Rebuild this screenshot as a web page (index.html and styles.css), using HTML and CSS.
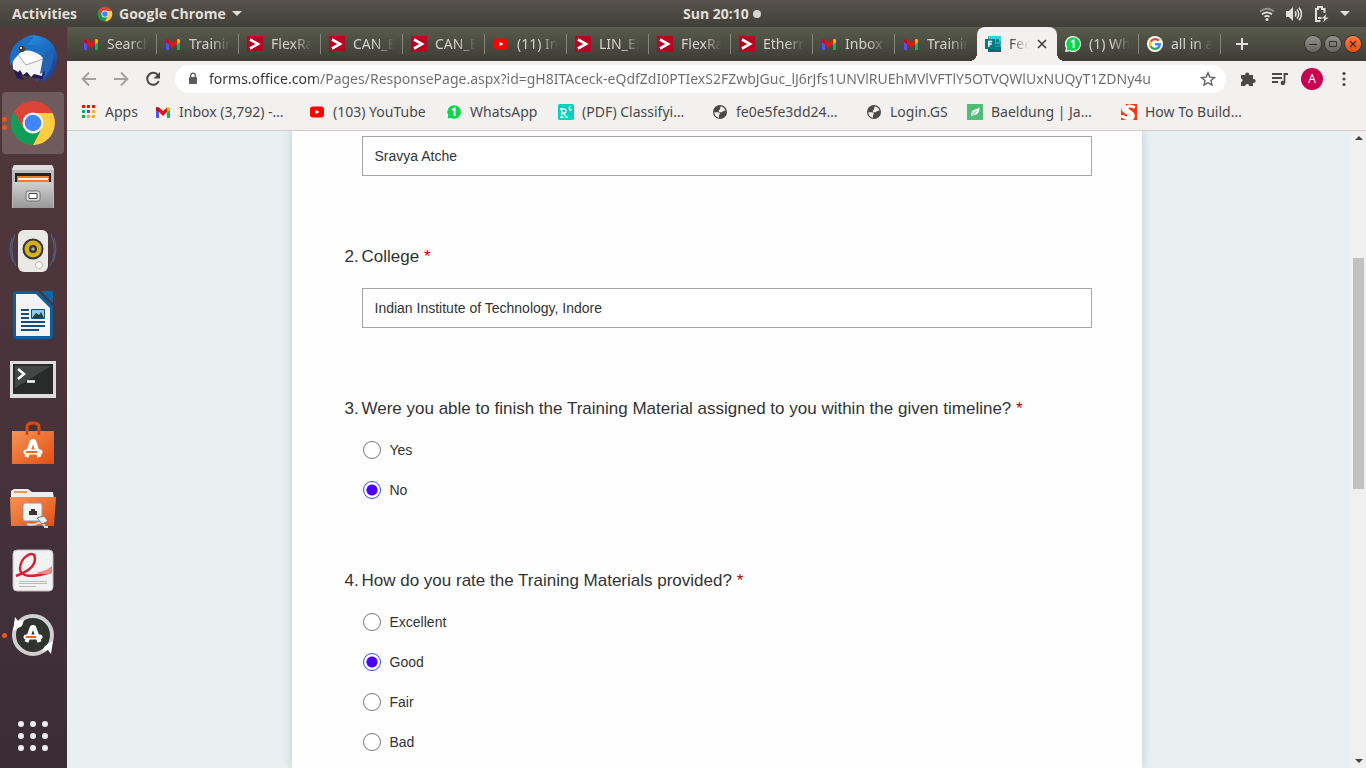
FILE: index.html
```html
<!DOCTYPE html>
<html lang="en">
<head>
<meta charset="utf-8">
<title>Feedback form</title>
<link rel="stylesheet" href="styles.css">
</head>
<body>
<svg class="sprite" aria-hidden="true">
  <defs>
    <linearGradient id="silver" x1="0" y1="0" x2="0" y2="1"><stop offset="0" stop-color="#d0d0d0"/><stop offset="1" stop-color="#999"/></linearGradient>
    <linearGradient id="orange" x1="0" y1="0" x2="1" y2="1"><stop offset="0" stop-color="#f59355"/><stop offset="1" stop-color="#e44f14"/></linearGradient>
    <linearGradient id="bird" x1="0" y1="0" x2="1" y2="1"><stop offset="0" stop-color="#2b9be0"/><stop offset=".6" stop-color="#1a62bd"/><stop offset="1" stop-color="#24277b"/></linearGradient>
  </defs>
  <symbol id="gmail" viewBox="0 0 16 16"><path fill="#5552ee" d="M1 4h3v10H2q-1 0-1-1z"/><path fill="#11b45a" d="M12 6l3-2v9q0 1-1 1h-2z"/><path fill="#e8140c" d="M1 5Q1 2 4 3.600l4 3.400 4-3.400V8l-4 4-4-4-3-2z"/><path fill="#ffc400" d="M12 3.600Q15 2 15 5v1l-3 2.500z"/><path fill="#b50d24" d="M1 5q0-1.500 1-2l2 1.500V8L1 6z"/></symbol>
  <symbol id="vector" viewBox="0 0 16 16"><path fill="#b70623" d="M0 0h16v16H0z"/><path fill="none" stroke="#fff" stroke-width="2.600" d="M3 3.500l8 4.500-8 4.500"/></symbol>
  <symbol id="youtube" viewBox="0 0 16 16"><rect x="1" y="2.500" width="14" height="11" rx="3" fill="#f00"/><path fill="#fff" d="M6.500 5.700v4.600L10.500 8z"/></symbol>
  <symbol id="whatsapp" viewBox="0 0 16 16"><path fill="#fff" d="M8 0a8 8 0 1 1-3.400 15.200L0 16l1-4A8 8 0 0 1 8 0z"/><path fill="#0bd54b" d="M8 1.200a6.800 6.800 0 1 1-3.200 12.700L1.500 14.600l.8-3A6.800 6.800 0 0 1 8 1.200z"/><path fill="none" stroke="#fff" stroke-width="1.800" d="M6 6l2.600-1.500V12"/></symbol>
  <symbol id="forms" viewBox="0 0 16 16"><path fill="#26a9b5" d="M3 0h13v16H3z"/><path fill="#37d0d8" d="M4 0h12v5H4z"/><path fill="#0b6773" d="M3 11h13v5H3z"/><circle cx="12.500" cy="4.500" r="1.700" fill="#0b7f8b"/><path fill="#0b7f8b" d="M10 8h5v2h-5zM10 12h5v2h-5z"/><rect y="3" width="10" height="10" fill="#037b83"/><path fill="none" stroke="#fff" stroke-width="1.500" d="M3.800 11V5.500H7.200M4 8h2.800"/></symbol>
  <symbol id="google" viewBox="0 0 16 16"><circle cx="8" cy="8" r="8" fill="#fff"/><g fill="none" stroke-width="2.400"><path stroke="#ea4335" d="M3.800 5.600A4.900 4.900 0 0 1 11.800 4.800"/><path stroke="#fbbc05" d="M3.800 5.400a5 5 0 0 0 0 5.200"/><path stroke="#34a853" d="M3.600 10.200a4.900 4.900 0 0 0 7.900 1.200"/><path stroke="#4285f4" d="M8 8.200h4.800a5 5 0 0 1-1.600 3.600"/></g></symbol>
  <symbol id="chrome" viewBox="0 0 48 48"><circle cx="24" cy="24" r="22" fill="#db4437"/><path fill="#0f9d58" d="M5 13A22 22 0 0 0 24 46l9-17-9 5-10-6z"/><path fill="#ffcd40" d="M24 46A22 22 0 0 0 43.500 14H24l9 15z"/><path fill="#db4437" d="M5 13A22 22 0 0 1 43.500 14H24l-10 14z"/><circle cx="24" cy="24" r="10.500" fill="#f5f5f5"/><circle cx="24" cy="24" r="8.300" fill="#4285f4"/></symbol>
  <symbol id="apps" viewBox="0 0 16 16"><path fill="#e8140c" d="M1 1h3v3H1zM6 1h3v3H6zM11 1h3v3h-3z"/><path fill="#0fa958" d="M1 6h3v3H1zM1 11h3v3H1z"/><path fill="#5552ee" d="M6 6h3v3H6z"/><path fill="#ffb400" d="M11 6h3v3h-3zM6 11h3v3H6zM11 11h3v3h-3z"/></symbol>
  <symbol id="gate" viewBox="0 0 16 16"><rect width="16" height="16" rx="1.500" fill="#0ccfbf"/><path fill="none" stroke="#fff" stroke-width="1.300" d="M2 13.300h3.500M3.700 13V5M2 5h3.500q2.500 0 2.500 2T5.500 9.200H4M6 9.200l2 4h2"/><path fill="none" stroke="#fff" d="M13 2.500h-1q-1 0-1 2t1 2h1v-2"/></symbol>
  <symbol id="globe" viewBox="0 0 16 16"><circle cx="8" cy="8" r="7" fill="#4a4a4a"/><path fill="#f2f1f0" d="M2.300 8.300H6q2 0 2 1.700l-1 .8v3Q2.500 13 2.300 8.300zM8.500 2.400q4 .2 5 4.100l-2.500.7-1.500 1H7.300L6.500 6.500l1.500-1z"/></symbol>
  <symbol id="leaf" viewBox="0 0 16 16"><path fill="#52bd78" d="M0 0h16v16H0z"/><path fill="#fff" d="M12.500 3.500q0 7-5 7.500-2.500.5-3.500 1.500 0-6 4-7 3-.5 4.500-2z"/><path stroke="#52bd78" d="M5 11.500l5-5"/></symbol>
  <symbol id="snake" viewBox="0 0 16 16"><path fill="#f5380d" d="M5 0h11v16h-4q4-5-1-8Q4 6 5 0zM0 3q0 5 5 7 3 2 0 3.500L0 11zM0 13q2 2 5 3H0z"/><path fill="#f5380d" d="M8 3q3-2 7 0v2Q8 3 8 3z"/><path fill="none" stroke="#fff" stroke-width="3" d="M14 3.500Q6 0 6 4.500C6 8 12.500 7.500 12 11.500 11 15.500 5 14.500 1 12"/></symbol>
</svg>

<header class="topbar">
  <div class="top-left">
    <button type="button">Activities</button>
    <button class="app-menu" type="button"><svg class="i16"><use href="#chrome"/></svg>Google Chrome<span class="caret"></span></button>
  </div>
  <time class="clock">Sun 20:10<span class="notice"></span></time>
  <button class="status" type="button" aria-label="System menu">
    <svg class="i16" viewBox="0 0 16 16" fill="none" stroke="#e2dfda" stroke-width="1.800"><path opacity=".45" d="M1 5.500q7-5.500 14 0"/><path d="M3 8.200q5-3.800 10 0M5.500 10.700q2.500-1.700 5 0"/><circle cx="8" cy="13.500" r="1.500" fill="#e2dfda" stroke="none"/></svg>
    <svg class="i16" viewBox="0 0 16 16" fill="none" stroke="#e2dfda" stroke-width="1.500"><path fill="#e2dfda" stroke="none" d="M0 5h3l4-4v14l-4-4H0z"/><path d="M9 5.500q2 2.500 0 5M11 3.500q3.500 4.500 0 9M13 1.800q5 6.200 0 12.400"/></svg>
    <svg class="i16" viewBox="0 0 16 16" fill="none" stroke="#e2dfda" stroke-width="2"><path d="M7.500 15H3V3h2V1h4v2h2.500v4M5 12h3.500"/><path fill="#e2dfda" stroke="none" d="M13.500 8L8.500 12.500h3L10 16.500l5.500-5h-3z"/></svg>
    <span class="caret"></span>
  </button>
</header>

<div class="desktop">
  <nav class="dock" aria-label="Dock">
    <button class="dock-item" type="button" aria-label="Thunderbird"><svg viewBox="0 0 48 48"><path fill="url(#bird)" d="M12 6Q20-2 30 1q17 4 18 22 0 14-11 22l-4 3 1-5-8 4 4-6z"/><path fill="#241a58" d="M3 31l5 12 7 2-3-5 9 2 12 2 4-8z"/><path fill="#f5f5f5" d="M8 13l-5 7 1 14 5 3 2-2 3 5 4-3 4 5 3-3 8 2 3-24q-12-8-28-5z"/><path fill="#fff" stroke="#aaa" d="M7 17l10 13 17-6"/><path fill="#1d6fc5" d="M1 31Q-1 12 12 5 17 0 25 2l-7 8q12-2 18 7v8l-5-5Q17 11 9 20q-5 5-8 11z"/><circle cx="13" cy="14" r="3" fill="#503b24"/><circle cx="12" cy="13" r="1" fill="#fff"/><path fill="#2563b3" d="M35 17l10 1-3 15-8 12 2-9-5 3z"/></svg></button>
    <button class="dock-item current" type="button" aria-label="Chrome"><span class="pips"><i></i><i></i></span><svg><use href="#chrome"/></svg></button>
    <button class="dock-item" type="button" aria-label="Files"><svg viewBox="0 0 48 48"><path fill="#bcbcbc" d="M5 2h38l2 4v39H3V6z"/><path fill="#ddd" d="M5 2h38l2 5H3z"/><path fill="#252525" d="M6 10h36v10H6z"/><path fill="#ef7b2b" d="M8 13h32v7H8z"/><path fill="#fff1d8" d="M9 15h30v2H9z"/><path fill="url(#silver)" d="M4 19h40v26H4z"/><rect x="17" y="28" width="14" height="10" rx="2" fill="#ddd" stroke="#777"/><path fill="#fff" stroke="#444" d="M20 30.500h8v5h-8z"/></svg></button>
    <button class="dock-item" type="button" aria-label="Rhythmbox"><svg viewBox="0 0 48 48"><g fill="none" stroke="#566a98" stroke-width="1.200" opacity=".7"><path d="M6 7q-7 17 1 32M3 11q-4 13 1 24M42 7q7 17-1 32M45 11q4 13-1 24"/></g><rect x="9" y="3" width="30" height="42" rx="6" fill="#e9e9e7"/><circle cx="24" cy="22" r="10.500" fill="#343434"/><circle cx="24" cy="22" r="8.500" fill="#d4b01f"/><circle cx="24" cy="22" r="4" fill="#333"/><circle cx="24" cy="22" r="1.800" fill="#aaa"/><circle cx="30" cy="38" r="3.500" fill="#f8f8f8" stroke="#bbb"/></svg></button>
    <button class="dock-item" type="button" aria-label="LibreOffice Writer"><svg viewBox="0 0 48 48"><rect x="4" y="0" width="40" height="48" rx="3" fill="#0d5d97"/><path fill="#4c3338" d="M29 0l3 0 12 12v3z"/><path fill="#0868a8" d="M32 0h11q1 0 1 2v10z"/><path fill="#f3f3f3" d="M7 3h20l14 14v28H7z"/><path fill="none" stroke="#124f7c" stroke-width="2" d="M12 19h8M12 23h8M12 27h8M12 31h24M12 35h24M12 39h18"/><path fill="#91c9ea" stroke="#124f7c" d="M22.500 18.500h13v9h-13z"/><path fill="#303c45" d="M23 27l4-5 3 2 2-3 3 6z"/></svg></button>
    <button class="dock-item" type="button" aria-label="Terminal"><svg viewBox="0 0 48 48"><path fill="#ddd" d="M1 6h46v37H1z"/><path fill="#292b2b" d="M4 9h40v30H4z"/><path fill="#454747" d="M6 11h36L6 33z"/><path fill="none" stroke="#fff" stroke-width="2.500" d="M9 14l6 5-6 5M18 26.500h8"/></svg></button>
    <button class="dock-item" type="button" aria-label="Software"><svg viewBox="0 0 48 48"><path fill="none" stroke="#d84a15" stroke-width="3" d="M18 18V8q0-4 6-4t6 4v10"/><path fill="url(#orange)" d="M3 12h42v33H3z"/><path fill="none" stroke="#c94414" stroke-width="2.500" d="M18 16v-5M30 16v-5"/><path fill="none" stroke="#fff" stroke-width="4" stroke-linejoin="bevel" d="M17.500 38l5.500-16h2l5.500 16"/><path stroke="#fff" stroke-width="5" stroke-linecap="round" d="M17 33h14"/><path stroke="#eb652c" stroke-width="2" d="M17 33h11"/></svg></button>
    <button class="dock-item" type="button" aria-label="Network folder"><svg viewBox="0 0 48 48"><path fill="#eee" d="M2 14V8l3-2h14l4 3h21l1 7z"/><path fill="#f69453" d="M5 8h13v2H5z"/><path fill="url(#orange)" d="M1 14h46l-2 29H2z"/><rect x="14" y="20" width="19" height="18" rx="2" fill="#f3f3f3" stroke="#999"/><path fill="#353832" d="M20 32v-4h2v-2h4v2h2v4z"/><path fill="none" stroke="#ddd" stroke-width="2" d="M18 41q6 2 11-1 5-1 7 4l3 0"/><path fill="#eee" stroke="#777" d="M28 35l7-2 4 5-6 3z"/></svg></button>
    <button class="dock-item" type="button" aria-label="Document viewer"><svg viewBox="0 0 48 48"><rect x="4" y="3" width="40" height="41" rx="4" fill="#f2f2f2" stroke="#bbb"/><path fill="none" stroke="#d32331" stroke-width="2.500" d="M7 29q19-7 19-17 0-7-7-4-8 5-8 14 1 12 31 3"/><path fill="#e88b8e" d="M27 25q9 0 16-6v7q-7 3-16-1z"/><path stroke="#bbb" d="M10 34.500h28M10 36.500h28M10 39.500h17"/></svg></button>
    <button class="dock-item" type="button" aria-label="Software updater"><span class="pips"><i></i></span><svg viewBox="0 0 48 48"><circle cx="24" cy="24" r="19" fill="#30332f" stroke="#cfcfcf" stroke-width="4"/><path fill="#fff" d="M6 6l3 4 6-1-2 6-9 5zM42 43l-3-4-6 1 3-5 8-5z"/><path fill="none" stroke="#fff" stroke-width="4" stroke-linejoin="bevel" d="M17.500 31L23 16h2l5.500 15"/><path stroke="#fff" stroke-width="5" stroke-linecap="round" d="M17 26h14"/><path stroke="#ec6424" stroke-width="2" d="M17 26h10"/></svg></button>
    <button class="dock-item launcher" type="button" aria-label="Show applications"><svg viewBox="0 0 48 48" fill="#eee"><circle cx="12" cy="12" r="3"/><circle cx="24" cy="12" r="3"/><circle cx="36" cy="12" r="3"/><circle cx="12" cy="24" r="3"/><circle cx="24" cy="24" r="3"/><circle cx="36" cy="24" r="3"/><circle cx="12" cy="36" r="3"/><circle cx="24" cy="36" r="3"/><circle cx="36" cy="36" r="3"/></svg></button>
  </nav>

  <div class="window">
    <div class="tabstrip">
      <button class="tab" type="button"><svg class="i16"><use href="#gmail"/></svg><span>Search</span></button>
      <button class="tab" type="button"><svg class="i16"><use href="#gmail"/></svg><span>Trainin</span></button>
      <button class="tab" type="button"><svg class="i16"><use href="#vector"/></svg><span>FlexRa</span></button>
      <button class="tab" type="button"><svg class="i16"><use href="#vector"/></svg><span>CAN_E</span></button>
      <button class="tab" type="button"><svg class="i16"><use href="#vector"/></svg><span>CAN_E</span></button>
      <button class="tab" type="button"><svg class="i16"><use href="#youtube"/></svg><span>(11) In</span></button>
      <button class="tab" type="button"><svg class="i16"><use href="#vector"/></svg><span>LIN_E:</span></button>
      <button class="tab" type="button"><svg class="i16"><use href="#vector"/></svg><span>FlexRa</span></button>
      <button class="tab" type="button"><svg class="i16"><use href="#vector"/></svg><span>Ethern</span></button>
      <button class="tab" type="button"><svg class="i16"><use href="#gmail"/></svg><span>Inbox</span></button>
      <button class="tab" type="button"><svg class="i16"><use href="#gmail"/></svg><span>Trainin</span></button>
      <div class="tab active"><svg class="i16"><use href="#forms"/></svg><span>Fee</span><button class="close" type="button" aria-label="Close tab"><svg viewBox="0 0 10 10" fill="none" stroke="#444" stroke-width="1.700"><path d="M1 1l8 8M9 1L1 9"/></svg></button></div>
      <button class="tab" type="button"><svg class="i16"><use href="#whatsapp"/></svg><span>(1) Wh</span></button>
      <button class="tab" type="button"><svg class="i16"><use href="#google"/></svg><span>all in a</span></button>
      <button class="new-tab" type="button" aria-label="New tab"><svg viewBox="0 0 12 12" stroke="#e2dfda" stroke-width="2"><path d="M6 0v12M0 6h12"/></svg></button>
      <div class="controls">
        <button type="button" aria-label="Minimize"><svg viewBox="0 0 16 16" stroke="#33322e"><path d="M4 8.500h8"/></svg></button>
        <button type="button" aria-label="Maximize"><svg viewBox="0 0 16 16" fill="none" stroke="#33322e"><path d="M4.500 5.500h7v5h-7z"/></svg></button>
        <button class="quit" type="button" aria-label="Close"><svg viewBox="0 0 16 16" stroke="#4b1f08" stroke-width="1.300"><path d="M5 5l6 6M11 5l-6 6"/></svg></button>
      </div>
    </div>

    <div class="toolbar">
      <button class="tool" type="button" aria-label="Back"><svg class="i16" viewBox="0 0 16 16" fill="none" stroke="#a3a2a1" stroke-width="2"><path d="M15 8H2M8 1.500L1.700 8 8 14.500"/></svg></button>
      <button class="tool" type="button" aria-label="Forward"><svg class="i16" viewBox="0 0 16 16" fill="none" stroke="#a3a2a1" stroke-width="2"><path d="M1 8h13M8 1.500L14.300 8 8 14.500"/></svg></button>
      <button class="tool" type="button" aria-label="Reload"><svg class="i16" viewBox="0 0 16 16" fill="none" stroke="#494949" stroke-width="2"><path d="M13 4.200A6 6 0 1 0 13.800 10"/><path fill="#494949" stroke="none" d="M15 1v6.500H8.500z"/></svg></button>
      <div class="omnibox">
        <svg class="i16" viewBox="0 0 16 16"><rect x="4" y="6" width="8" height="7" rx="1" fill="#5c5c5c"/><path fill="none" stroke="#5c5c5c" stroke-width="1.300" d="M5.700 6V4.500a2.300 2.300 0 0 1 4.600 0V6"/></svg>
        <input type="text" aria-label="Address" value="forms.office.com/Pages/ResponsePage.aspx?id=gH8ITAceck-eQdfZdI0PTIexS2FZwbJGuc_lJ6rJfs1UNVlRUEhMVlVFTlY5OTVQWlUxNUQyT1ZDNy4u">
        <button class="tool" type="button" aria-label="Bookmark"><svg class="i16" viewBox="0 0 16 16" fill="none" stroke="#5f5f5f" stroke-width="1.400"><path d="M8 1.800l1.800 4.300 4.700.4-3.600 3 1.100 4.600-4-2.400-4 2.400 1.100-4.600-3.600-3 4.700-.4z"/></svg></button>
      </div>
      <button class="tool" type="button" aria-label="Extensions"><svg class="i16" viewBox="0 0 16 16"><path fill="#494949" d="M1 4h4.300a2 2 0 1 1 3.800 0H13v4a2 2 0 1 1 0 3.800V15H9.200a2 2 0 0 0-4 0H1v-3.800a2 2 0 0 0 0-3.900z"/></svg></button>
      <button class="tool" type="button" aria-label="Media"><svg class="i16" viewBox="0 0 16 16" fill="none" stroke="#494949" stroke-width="1.800"><path d="M0 3h10M0 7h10M0 11h6M12.500 12V3H16"/><circle cx="10.800" cy="12" r="2.200" fill="#494949" stroke="none"/></svg></button>
      <button class="tool" type="button" aria-label="Profile"><span class="avatar">A</span></button>
      <button class="tool" type="button" aria-label="Menu"><svg class="i16" viewBox="0 0 16 16" fill="#494949"><circle cx="8" cy="2.500" r="1.600"/><circle cx="8" cy="8" r="1.600"/><circle cx="8" cy="13.500" r="1.600"/></svg></button>
    </div>

    <nav class="bookmarks" aria-label="Bookmarks">
      <a href="#"><svg class="i16"><use href="#apps"/></svg>Apps</a>
      <a href="#"><svg class="i16"><use href="#gmail"/></svg>Inbox (3,792) -…</a>
      <a href="#"><svg class="i16"><use href="#youtube"/></svg>(103) YouTube</a>
      <a href="#"><svg class="i16"><use href="#whatsapp"/></svg>WhatsApp</a>
      <a href="#"><svg class="i16"><use href="#gate"/></svg>(PDF) Classifyi…</a>
      <a href="#"><svg class="i16"><use href="#globe"/></svg>fe0e5fe3dd24…</a>
      <a href="#"><svg class="i16"><use href="#globe"/></svg>Login.GS</a>
      <a href="#"><svg class="i16"><use href="#leaf"/></svg>Baeldung | Ja…</a>
      <a href="#"><svg class="i16"><use href="#snake"/></svg>How To Build…</a>
    </nav>

    <main class="page">
      <form class="form">
        <div class="question first"><div class="answer"><input type="text" aria-label="Name" value="Sravya Atche"></div></div>
        <div class="question">
          <label class="title" for="college"><span class="num">2.</span><span>College <b>*</b></span></label>
          <div class="answer"><input id="college" type="text" value="Indian Institute of Technology, Indore"></div>
        </div>
        <fieldset class="question">
          <legend class="title"><span class="num">3.</span><span>Were you able to finish the Training Material assigned to you within the given timeline? <b>*</b></span></legend>
          <div class="choices">
            <label><input type="radio" name="finish">Yes</label>
            <label><input type="radio" name="finish" checked>No</label>
          </div>
        </fieldset>
        <fieldset class="question">
          <legend class="title"><span class="num">4.</span><span>How do you rate the Training Materials provided? <b>*</b></span></legend>
          <div class="choices">
            <label><input type="radio" name="rate">Excellent</label>
            <label><input type="radio" name="rate" checked>Good</label>
            <label><input type="radio" name="rate">Fair</label>
            <label><input type="radio" name="rate">Bad</label>
          </div>
        </fieldset>
      </form>
      <div class="scrollbar" aria-hidden="true"><span class="up"></span><span class="thumb"></span><span class="down"></span></div>
    </main>
  </div>
</div>
</body>
</html>
```
FILE: styles.css
```css
* { box-sizing: border-box; }
body {
  margin: 0;
  height: 100vh;
  overflow: hidden;
  display: flex;
  flex-direction: column;
  font: 14px/20px "Noto Sans", "Open Sans", sans-serif;
  color: #4a4a4a;
}
button { border: 0; padding: 0; background: none; color: inherit; font: inherit; }
svg { display: block; }
.sprite { position: absolute; width: 0; height: 0; }
.i16 { width: 16px; height: 16px; flex: none; }

/* System bar */
.topbar {
  display: grid;
  grid-template-columns: 1fr auto 1fr;
  align-items: center;
  height: 27px;
  flex: none;
  padding: 0 16px 0 12px;
  background: linear-gradient(#58544c, #403f39);
  color: #e2dfda;
  font: 700 14px/20px "Open Sans", sans-serif;
}
.top-left { display: flex; align-items: center; gap: 20px; }
.app-menu { display: flex; align-items: center; gap: 6px; }
.caret { border: 5px solid transparent; border-top-color: #e2dfda; border-bottom: 0; }
.clock { display: flex; align-items: center; gap: 4px; padding-left: 82px; }
.notice { width: 8px; height: 8px; border-radius: 50%; background: #d7d4cf; }
.status { justify-self: end; display: flex; align-items: center; gap: 11px; }

.desktop { flex: 1; min-height: 0; display: flex; }

/* Dock */
.dock {
  width: 67px;
  flex: none;
  display: flex;
  flex-direction: column;
  gap: 2px;
  padding: 1px 3px 1px 2px;
  background: linear-gradient(#53383c, #46323a 60%, #3a2d34);
}
.dock-item {
  position: relative;
  flex: none;
  height: 62px;
  display: flex;
  align-items: center;
  justify-content: center;
  border-radius: 4px;
}
.dock-item svg { width: 48px; height: 48px; }
.current { background: #6f5a5d; }
.pips { position: absolute; left: 0; display: grid; gap: 3px; }
.pips i { width: 5px; height: 5px; border-radius: 50%; background: #f0541e; }
.launcher { margin-top: auto; }

/* Browser window */
.window { flex: 1; min-width: 0; display: flex; flex-direction: column; }
.tabstrip {
  height: 34px;
  flex: none;
  display: flex;
  align-items: center;
  padding: 0 5px 0 8px;
  background: linear-gradient(#585b4b, #3e3d38);
  color: #d4d3cb;
}
.tab {
  flex: 0 1 82px;
  min-width: 0;
  height: 20px;
  display: flex;
  align-items: center;
  gap: 8px;
  padding: 0 8px;
  border-right: 1px solid #85857a;
  text-align: left;
}
.tab span {
  flex: 1;
  overflow: hidden;
  white-space: nowrap;
  -webkit-mask-image: linear-gradient(to right, #000 calc(100% - 18px), transparent);
  mask-image: linear-gradient(to right, #000 calc(100% - 18px), transparent);
}
.tab:has(+ .active) { border-color: transparent; }
.active {
  position: relative;
  flex-basis: 80px;
  height: 34px;
  padding-right: 10px;
  border: 0;
  border-radius: 8px 8px 0 0;
  background: #f2f1f0;
  color: #4a4a4a;
}
.active::before, .active::after {
  content: "";
  position: absolute;
  bottom: 0;
  width: 8px;
  height: 8px;
}
.active::before { right: 100%; background: radial-gradient(circle at 0 0, transparent 8px, #f2f1f0 8px); }
.active::after { left: 100%; background: radial-gradient(circle at 100% 0, transparent 8px, #f2f1f0 8px); }
.close svg { width: 10px; height: 10px; }
.new-tab { padding: 0 15px; }
.new-tab svg { width: 12px; height: 12px; }
.controls { margin-left: auto; display: flex; gap: 4px; }
.controls button { width: 16px; height: 16px; border-radius: 50%; background: linear-gradient(#91918a, #66665f); box-shadow: 0 0 0 1px #33322e; }
.controls .quit { background: linear-gradient(#fa7c45, #e94f0c); }

.toolbar {
  height: 36px;
  flex: none;
  display: flex;
  align-items: center;
  gap: 4px;
  padding: 0 8px;
  background: #f2f1f0;
}
.tool { width: 28px; height: 28px; flex: none; display: grid; place-items: center; }
.omnibox {
  flex: 1;
  height: 28px;
  display: flex;
  align-items: center;
  gap: 8px;
  margin: 0 4px;
  padding: 0 4px 0 10px;
  border-radius: 14px;
  background: #fff;
}
.omnibox input {
  flex: 1;
  min-width: 0;
  border: 0;
  padding: 0;
  outline: 0;
  font: inherit;
  color: transparent;
  background: linear-gradient(to right, #333 106px, #6c6c6c 106px);
  -webkit-background-clip: text;
  background-clip: text;
}
.avatar { width: 22px; height: 22px; border-radius: 50%; background: #c8004f; color: #fff; font-size: 12px; line-height: 22px; }

.bookmarks {
  height: 34px;
  flex: none;
  display: grid;
  grid-template-columns: 74px 154px 137px 112px 154px 154px 101px 154px 1fr;
  align-items: center;
  padding: 0 14px 3px;
  border-bottom: 1px solid #cfcccb;
  background: #f2f1f0;
}
.bookmarks a { display: flex; align-items: center; gap: 8px; color: #4a4a4a; text-decoration: none; white-space: nowrap; }

/* Form */
.page { position: relative; flex: 1; min-height: 0; overflow: hidden; background: #e8f0f2; }
.form {
  max-width: 850px;
  min-height: 100%;
  margin: 0 auto;
  padding: 0 50px 0 53px;
  background: #fefefe;
  box-shadow: 0 0 10px #bfcacc;
  font: 14px/20px "Liberation Sans", Arial, sans-serif;
  color: #333;
}
.question { margin: 0 0 58px; padding: 0; border: 0; }
.title { display: flex; padding: 0; font-size: 17px; line-height: 26px; }
.title b { color: #b80000; font-weight: 400; }
.num { width: 17px; flex: none; }
.answer { padding: 18px 0 10px 17px; }
.first .answer { padding-top: 5px; }
.answer input {
  display: block;
  width: 100%;
  height: 40px;
  border: 1px solid #a6a6a6;
  padding: 0 12px;
  background: #fff;
  color: inherit;
  font: inherit;
}
.choices { padding: 8px 0 0 18px; }
.choices label { display: flex; align-items: center; gap: 9px; height: 40px; }
.choices input {
  appearance: none;
  width: 18px;
  height: 18px;
  margin: 0;
  border: 1px solid #767676;
  border-radius: 50%;
  background: #fff;
}
.choices input:checked { border-color: #2b50ff; background: radial-gradient(circle, #4b00ff 5px, #fff 6px); }

.scrollbar {
  position: absolute;
  top: 0;
  right: 0;
  bottom: 0;
  width: 15px;
  display: grid;
  grid-template-rows: 4fr 118fr 231fr 270fr 4fr;
  justify-items: center;
  padding: 5px 0;
  background: #f0f0f0;
}
.up { border: 4px solid transparent; border-bottom-color: #444; border-top: 0; align-self: start; }
.down { grid-row: 5; border: 4px solid transparent; border-top-color: #444; border-bottom: 0; align-self: end; }
.thumb { grid-row: 3; width: 11px; background: #c1c1c1; }
```
